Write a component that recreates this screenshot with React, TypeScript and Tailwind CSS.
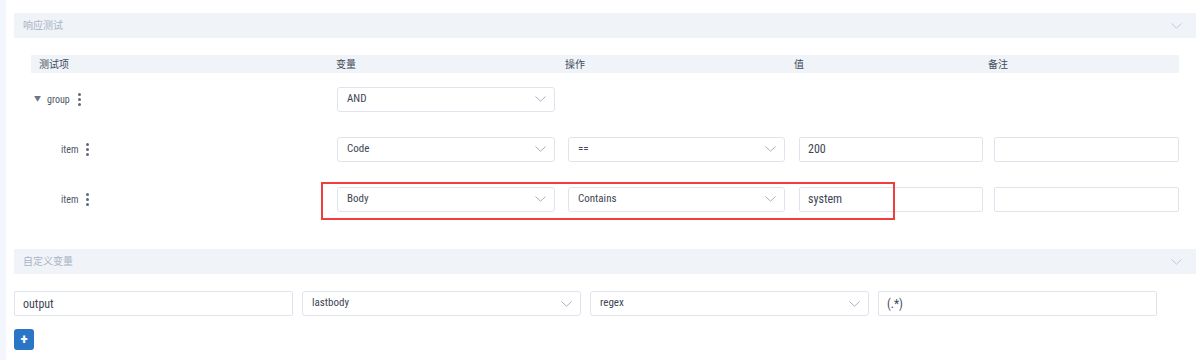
import React from "react";

const latin = {
  fontFamily:
    '"Liberation Sans Narrow", "Roboto Condensed", Roboto, "Noto Sans CJK SC", sans-serif',
};
const cjk = { fontFamily: 'Roboto, "Noto Sans CJK SC", sans-serif' };

function Chevron({ className = "" }: { className?: string }) {
  return (
    <svg width="11" height="6" viewBox="0 0 11 6" className={className} fill="none">
      <polyline points="0.5,0.5 5.5,5.2 10.5,0.5" stroke="currentColor" strokeWidth="1" />
    </svg>
  );
}

function Dots() {
  return (
    <span className="flex flex-col gap-[2px] ml-[8px]">
      <span className="w-[3px] h-[3px] rounded-full bg-[#5f6877]" />
      <span className="w-[3px] h-[3px] rounded-full bg-[#5f6877]" />
      <span className="w-[3px] h-[3px] rounded-full bg-[#5f6877]" />
    </span>
  );
}

function Select({ w, text }: { w: string; text: string }) {
  return (
    <div
      className={`${w} h-[25px] border border-[#dfe4ec] rounded-[3px] bg-white flex items-center justify-between pl-[9px] pr-[8px] shrink-0`}
    >
      <span className="text-[11px] text-[#3d4654]" style={latin}>
        {text}
      </span>
      <Chevron className="text-[#a7b0c0]" />
    </div>
  );
}

function Input({ w, text }: { w: string; text?: string }) {
  return (
    <div
      className={`${w} h-[25px] border border-[#dfe4ec] rounded-[2px] bg-white flex items-center pl-[8px] shrink-0`}
    >
      <span className="text-[12px] text-[#3d4654]" style={latin}>
        {text}
      </span>
    </div>
  );
}

function SectionHeader({ title }: { title: string }) {
  return (
    <div className="h-[25px] bg-[#f0f3f8] flex items-center justify-between pl-[9px] pr-[14px]">
      <span className="text-[10px] text-[#a9b3c4]" style={cjk}>
        {title}
      </span>
      <Chevron className="text-[#c3cad6]" />
    </div>
  );
}

function ItemLabel() {
  return (
    <div className="w-[306px] shrink-0 flex items-center pl-[30px]">
      <span className="text-[10px] text-[#4d5665]" style={latin}>
        item
      </span>
      <Dots />
    </div>
  );
}

export default function App() {
  return (
    <div className="w-[1200px] h-[360px] bg-white flex overflow-hidden">
      <div className="w-[6px] h-full bg-[#f3f6fc] shrink-0" />
      <div className="flex-1 pl-[8px] pr-[8px] pt-[13px]">
        <SectionHeader title="响应测试" />
        <div className="pl-[17px] pr-[17px] pt-[17px]">
          <div
            className="h-[18px] bg-[#f0f3f8] flex items-center text-[10px] text-[#3f4a5a]"
            style={cjk}
          >
            <span className="w-[305px] pl-[8px] shrink-0">测试项</span>
            <span className="w-[229px] shrink-0">变量</span>
            <span className="w-[229px] shrink-0">操作</span>
            <span className="w-[194px] shrink-0">值</span>
            <span>备注</span>
          </div>
          <div className="h-[1px]" />
          {/* group row */}
          <div className="h-[50px] flex items-center">
            <div className="w-[306px] shrink-0 flex items-center pl-[3px]">
              <span className="text-[7px] text-[#6b7482] mr-[6px] leading-none" style={latin}>
                ▼
              </span>
              <span className="text-[10px] text-[#4d5665]" style={latin}>
                group
              </span>
              <Dots />
            </div>
            <Select w="w-[218px]" text="AND" />
          </div>
          {/* item rows */}
          <div className="h-[50px] flex items-center">
            <ItemLabel />
            <Select w="w-[218px]" text="Code" />
            <div className="w-[13px] shrink-0" />
            <Select w="w-[217px]" text="==" />
            <div className="w-[14px] shrink-0" />
            <Input w="w-[184px]" text="200" />
            <div className="w-[11px] shrink-0" />
            <Input w="w-[185px]" />
          </div>
          <div className="h-[50px] flex items-center relative">
            <ItemLabel />
            <Select w="w-[218px]" text="Body" />
            <div className="w-[13px] shrink-0" />
            <Select w="w-[217px]" text="Contains" />
            <div className="w-[14px] shrink-0" />
            <Input w="w-[184px]" text="system" />
            <div className="w-[11px] shrink-0" />
            <Input w="w-[185px]" />
            <div className="absolute left-[290px] top-[8px] w-[574px] h-[38px] border-2 border-[#f23d3d] pointer-events-none" />
          </div>
        </div>
        <div className="mt-[25px]">
          <SectionHeader title="自定义变量" />
        </div>
        <div className="flex gap-[9px] mt-[17px]">
          <Input w="w-[279px]" text="output" />
          <Select w="w-[279px]" text="lastbody" />
          <Select w="w-[279px]" text="regex" />
          <Input w="w-[279px]" text="(.*)" />
        </div>
        <button
          className="mt-[13px] w-[20px] h-[21px] rounded-[3px] bg-[#2a76c6] text-white flex items-center justify-center text-[15px] leading-none font-bold"
          style={latin}
        >
          +
        </button>
      </div>
      <div className="w-px shrink-0 flex flex-col">
        <div className="h-[58px]" />
        <div className="flex-1 bg-[#d7dce4]" />
      </div>
    </div>
  );
}
